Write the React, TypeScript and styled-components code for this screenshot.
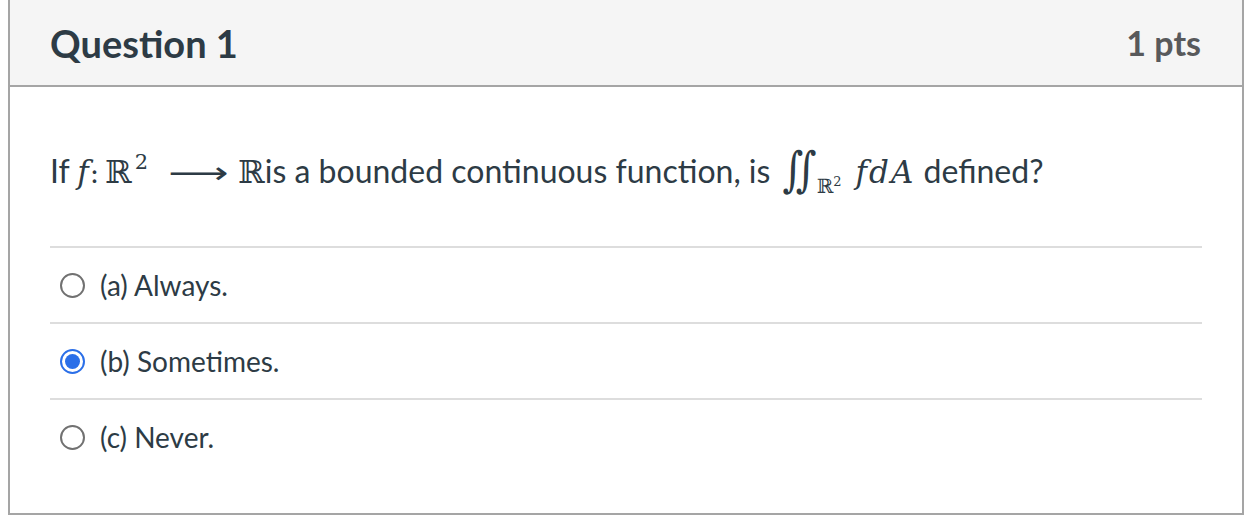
import styled, { createGlobalStyle } from "styled-components"

const GlobalStyle = createGlobalStyle`
  html, body {
    margin: 0;
    padding: 0;
    background: #ffffff;
    overflow: hidden;
  }
  body {
    font-family: Lato, "Open Sans", "Liberation Sans", sans-serif;
    color: #2d3b45;
  }
`

const Card = styled.div`
  box-sizing: border-box;
  width: 1236px;
  margin: -2px 0 0 8px;
  border: 2px solid #a5a5a5;
  background: #ffffff;
`

const Header = styled.div`
  height: 87px;
  padding: 0 41px 0 40px;
  box-sizing: border-box;
  display: flex;
  align-items: center;
  justify-content: space-between;
  background: #f5f5f5;
  border-bottom: 2px solid #a5a5a5;
`

const Title = styled.h2`
  margin: 0;
  font-size: 38px;
  font-weight: 700;
  color: #2d3b45;
`

const Points = styled.div`
  font-size: 34px;
  font-weight: 700;
  color: #58595b;
`

const Body = styled.div`
  padding: 0 40px 39px 40px;
`

const Question = styled.div`
  height: 159px;
  display: flex;
  align-items: center;
  padding-top: 11px;
  box-sizing: border-box;
  font-size: 32px;
  white-space: nowrap;
`

const Bb = styled.span`
  font-family: "DejaVu Serif", "Liberation Serif", serif;
  font-size: 32px;
`

const Colon = styled.span`
  font-family: "DejaVu Serif", "Liberation Serif", serif;
  font-size: 28px;
  margin: 0 6px 0 -1px;
`

const Var = styled.i`
  font-family: "DejaVu Serif", "Liberation Serif", serif;
  font-size: 31px;
  font-style: italic;
  letter-spacing: 2px;
`

const Sup = styled.sup`
  font-family: "DejaVu Serif", serif;
  font-size: 21px;
  vertical-align: 14px;
  line-height: 0;
  margin-left: 3px;
`

const Arrow = styled.span`
  display: inline-block;
  width: 50px;
  margin: 0 20px 0 20px;
  font-family: "DejaVu Sans", sans-serif;
  font-size: 30px;
  transform: scaleX(1.4);
  transform-origin: left center;
`

const Integral = styled.span`
  display: inline-block;
  font-family: "DejaVu Serif", serif;
  font-size: 40px;
  font-style: italic;
  transform: scaleY(1.2);
  margin-left: 4px;
`

const Sub = styled.span`
  font-family: "DejaVu Serif", serif;
  font-size: 20px;
  vertical-align: -10px;
  margin-right: 14px;
`

const SubSup = styled.span`
  font-size: 13px;
  vertical-align: 7px;
`

const Options = styled.div`
  display: flex;
  flex-direction: column;
`

const Option = styled.label`
  height: 74px;
  display: flex;
  align-items: center;
  gap: 15px;
  padding-left: 10px;
  border-top: 2px solid #dddddd;
  font-size: 28px;
  color: #2d3b45;
`

const Radio = styled.span<{ $checked?: boolean }>`
  box-sizing: border-box;
  width: 25px;
  height: 25px;
  border-radius: 50%;
  border: 2px solid ${(p) => (p.$checked ? "#2b6fe8" : "#717171")};
  display: flex;
  align-items: center;
  justify-content: center;
  flex-shrink: 0;

  &::after {
    content: "";
    display: ${(p) => (p.$checked ? "block" : "none")};
    width: 15px;
    height: 15px;
    border-radius: 50%;
    background: #2b6fe8;
  }
`

const options = [
  { label: "(a) Always.", checked: false },
  { label: "(b) Sometimes.", checked: true },
  { label: "(c) Never.", checked: false },
]

export default function App() {
  return (
    <>
      <GlobalStyle />
      <Card>
        <Header>
          <Title>Question 1</Title>
          <Points>1 pts</Points>
        </Header>
        <Body>
          <Question>
            <span>
              If <Var>f</Var>
              <Colon>:</Colon>
              <Bb>ℝ</Bb>
              <Sup>2</Sup>
              <Arrow>⟶</Arrow>
              <Bb>ℝ</Bb>is a bounded continuous function, is{" "}
              <Integral>∬</Integral>
              <Sub>
                ℝ<SubSup>2</SubSup>
              </Sub>
              <Var>fdA</Var> defined?
            </span>
          </Question>
          <Options>
            {options.map((o) => (
              <Option key={o.label}>
                <Radio $checked={o.checked} />
                {o.label}
              </Option>
            ))}
          </Options>
        </Body>
      </Card>
    </>
  )
}
